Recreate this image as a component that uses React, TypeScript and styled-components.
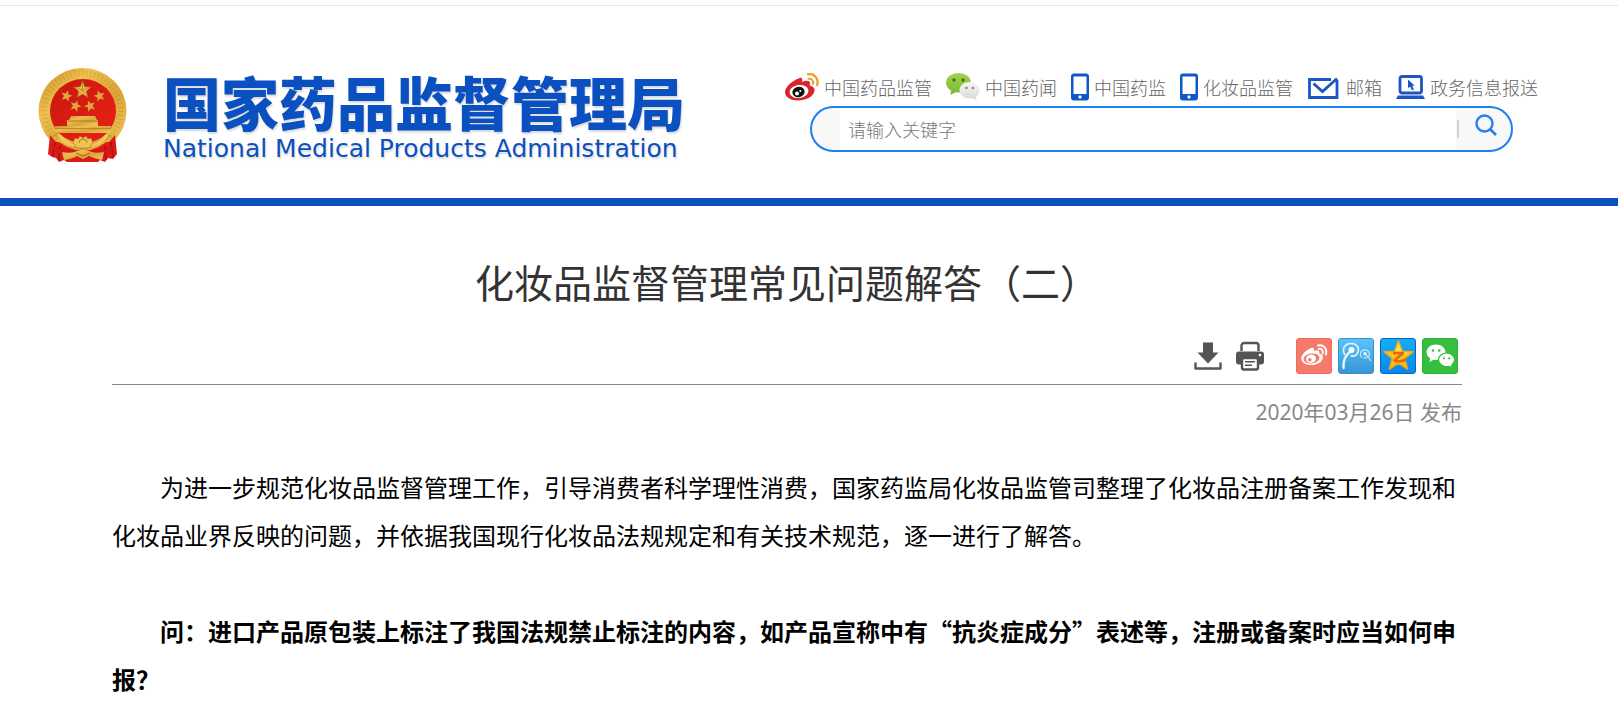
import React from "react";
import styled, { createGlobalStyle } from "styled-components";

const GlobalStyle = createGlobalStyle`
  * { box-sizing: border-box; }
  body {
    margin: 0;
    background: #fff;
    color: #000;
    font-family: "Noto Sans CJK SC", sans-serif;
  }
`;

const TopRule = styled.div`
  margin-top: 5px;
  border-top: 1px solid #e6e6e6;
`;

const Header = styled.header`
  display: flex;
  justify-content: space-between;
  align-items: flex-start;
  gap: 32px;
  padding: 62px 80px 34px 38px;
  border-bottom: 8px solid #0b50c0;
`;

const Brand = styled.a`
  display: flex;
  align-items: flex-start;
  gap: 36px;
  flex: none;
  color: #0b50c0;
  text-decoration: none;
`;

const BrandText = styled.span`
  display: flex;
  flex-direction: column;
`;

const BrandName = styled.span`
  font-size: 58px;
  line-height: 66px;
  font-weight: 900;
  text-shadow: 1px 2px 2px rgba(0, 0, 0, 0.15);
`;

const BrandLatin = styled.span`
  font-family: "DejaVu Sans", sans-serif;
  font-size: 25px;
  line-height: 30px;
  text-shadow: 1px 2px 2px rgba(0, 0, 0, 0.15);
`;

const Tools = styled.div`
  flex: none;
  display: flex;
  flex-direction: column;
`;

const QuickLinks = styled.ul`
  display: flex;
  gap: 14px;
  margin: 0;
  padding: 0;
  list-style: none;
`;

const QuickLink = styled.a`
  display: flex;
  align-items: center;
  gap: 5px;
  height: 38px;
  color: #666;
  font-size: 18px;
  font-weight: 300;
  line-height: 28px;
  text-decoration: none;
  white-space: nowrap;
`;

const SearchForm = styled.form`
  display: flex;
  margin: 0 25px;
  height: 46px;
  padding-left: 28px;
  background: #f8f8f8;
  border: 2px solid #1e7ff0;
  border-radius: 23px;
  overflow: hidden;
`;

const SearchInput = styled.input`
  flex: 1;
  min-width: 0;
  border: 0;
  outline: 0;
  padding: 0 8px;
  background: #fff;
  color: #555;
  font: 300 18px/28px "Noto Sans CJK SC", sans-serif;
  &::placeholder { color: #777; opacity: 1; }
`;

const SearchButton = styled.button`
  display: flex;
  align-items: center;
  gap: 16px;
  border: 0;
  padding: 0 14px 0 1px;
  background: transparent;
  cursor: pointer;
  &::before {
    content: "";
    width: 2px;
    height: 18px;
    background: #d2d2d2;
  }
  svg { margin-bottom: 8px; }
`;

const Article = styled.main`
  padding: 0 156px 0 112px;
`;

const Title = styled.h1`
  margin: 0;
  padding-top: 46px;
  color: #333;
  font-size: 39px;
  line-height: 58px;
  font-weight: 400;
  text-align: center;
`;

const Actions = styled.div`
  display: flex;
  justify-content: flex-end;
  align-items: center;
  gap: 14px;
  padding: 28px 4px 10px 0;
  border-bottom: 1px solid #888;
`;

const ShareList = styled.div`
  display: flex;
  gap: 6px;
  margin-left: 18px;
`;

const IconButton = styled.button`
  display: flex;
  padding: 0;
  border: 0;
  background: transparent;
  cursor: pointer;
`;

const ShareButton = styled(IconButton)<{ $fill: string; $edge: string }>`
  width: 36px;
  height: 36px;
  border: 1px solid ${(p) => p.$edge};
  border-radius: 3px;
  background: ${(p) => p.$fill};
`;

const Published = styled.p`
  margin: 0;
  padding-top: 10px;
  color: #888;
  font-size: 21px;
  line-height: 34px;
  font-family: "Noto Sans", "Noto Sans CJK SC", sans-serif;
  text-align: right;
`;

const Body = styled.div`
  padding-top: 34px;
  font-size: 24px;
  line-height: 48px;
`;

const Paragraph = styled.p<{ $strong?: boolean }>`
  margin: 0;
  text-indent: 2em;
  font-weight: ${(p) => (p.$strong ? 700 : 400)};
  & + & { margin-top: 48px; }
`;

const star = (cx: number, cy: number, r: number, turn = 0) =>
  Array.from({ length: 10 }, (_, i) => {
    const a = ((i * 36 - 90 + turn) * Math.PI) / 180;
    const q = i % 2 ? r * 0.42 : r;
    return `${(cx + q * Math.cos(a)).toFixed(1)},${(cy + q * Math.sin(a)).toFixed(1)}`;
  }).join(" ");

const Emblem = () => (
  <svg width="89" height="94" viewBox="0 0 89 94" aria-hidden="true">
    <defs>
      <linearGradient id="gold" x1="0" y1="0" x2="1" y2="1">
        <stop offset="0" stopColor="#c98a1e" />
        <stop offset="0.3" stopColor="#edc04f" />
        <stop offset="0.6" stopColor="#dba437" />
        <stop offset="1" stopColor="#f3cf62" />
      </linearGradient>
      <linearGradient id="red" x1="0" y1="0" x2="1" y2="1">
        <stop offset="0" stopColor="#c8170f" />
        <stop offset="1" stopColor="#ea2116" />
      </linearGradient>
    </defs>
    <ellipse cx="44.500" cy="43" rx="44" ry="43" fill="url(#gold)" />
    <path d="M12 67 L18 74 H71 L77 67 L79 86 L75 91 L70 90 L67 94 L62 92 L60 94 H29 L26 92 L21 94 L18 90 L14 89 L10 86Z" fill="#dc1a17" />
    <path d="M17 74 L15 88 M22 78 L21 92 M67 78 L68 92 M73 74 L75 89" stroke="#a90f16" strokeWidth="1.500" />
    <path d="M14 68 Q28 82 45 83 Q62 82 75 68 L70 64 H19Z" fill="url(#gold)" />
    <circle cx="44.500" cy="43" r="38" fill="none" stroke="#a96d16" strokeWidth="6" strokeDasharray="1 4" opacity="0.3" pathLength="300" />
    <ellipse cx="45" cy="43" rx="33" ry="32" fill="url(#red)" />
    <polygon points={star(44.5, 22, 9.5)} fill="#edbd4c" stroke="#8f5510" strokeWidth="0.5" />
    <path d="M44.500 22 V13 M44.500 22 L53 19 M44.500 22 L50 29 M44.500 22 L39 29 M44.500 22 L36 19" stroke="#a66b18" strokeWidth="0.6" />
    <polygon points={star(28.5, 28, 6, 15)} fill="#dfa83b" />
    <polygon points={star(61.5, 28, 6, -15)} fill="#dfa83b" />
    <polygon points={star(37.5, 38, 6, 20)} fill="#dfa83b" />
    <polygon points={star(52, 38, 6, -20)} fill="#dfa83b" />
    <path d="M33 48 H57 L59 52 H60 V58 H29 V52 H31Z" fill="url(#gold)" />
    <path d="M30 53 H60" stroke="#a56b18" strokeWidth="0.8" />
    <path d="M17 58 H73 V65 H17Z" fill="url(#gold)" />
    <path d="M17 60.500 H73" stroke="#b57b20" strokeWidth="0.8" />
    <path d="M22 66 Q30 76 38 76 L36 79 Q24 77 19 66Z M68 66 Q60 76 52 76 L54 79 Q66 77 71 66Z" fill="#f0c95a" />
    <path d="M35 75 L37 70 L40 71 L42 68 L45 70 L48 68 L50 71 L53 70 L55 75 L51 80 H39Z" fill="#efc453" stroke="#a56b18" strokeWidth="0.6" />
    <path d="M41 75 A4 4 0 0 1 49 75" fill="none" stroke="#b57b20" />
    <path d="M14 77 Q28 87 45 81 Q62 87 76 77 L76 81 Q62 91 45 86 Q28 91 14 81Z" fill="#d41719" />
    <path d="M24 84 Q34 86 39 83 L45 81 L51 83 Q56 86 66 84 L64 92 Q55 90 51 88 L45 91 L39 88 Q34 91 26 92Z" fill="url(#gold)" />
    <path d="M38 85 L45 88 L52 85" fill="none" stroke="#a56b18" />
  </svg>
);

const WeiboIcon = () => (
  <svg width="34" height="28" viewBox="0 0 34 28" aria-hidden="true">
    <path d="M13.500 5.500 C16 4 18 5 17 9 C21 7 25 7.500 25 10 C25 11 24 12 25 12.500 C28 13.500 30 15 29.500 18 C28 24 21 27.500 13 27.500 C6 27.500 0 24.500 0 19 C0 14 7 8 13.500 5.500Z" fill="#d9242a" />
    <ellipse cx="14" cy="18.500" rx="9.500" ry="6.500" fill="#fff" transform="rotate(-7 14 18.500)" />
    <ellipse cx="13.500" cy="19" rx="6.200" ry="5.200" fill="#111" transform="rotate(-15 13.500 19)" />
    <circle cx="12" cy="20.500" r="2" fill="#fff" />
    <circle cx="15.300" cy="18" r="1" fill="#fff" />
    <path d="M23 1.200 C29 0 34 5.500 32.200 12" fill="none" stroke="#eca02c" strokeWidth="2.400" strokeLinecap="round" />
    <path d="M23.500 5.800 C26.500 5.200 29 7.700 28 11" fill="none" stroke="#eca02c" strokeWidth="2" strokeLinecap="round" />
  </svg>
);

const WechatIcon = () => (
  <svg width="34" height="28" viewBox="0 0 34 28" aria-hidden="true">
    <defs>
      <linearGradient id="leaf" x1="0" y1="0" x2="0" y2="1">
        <stop offset="0" stopColor="#a5d24e" />
        <stop offset="1" stopColor="#79b833" />
      </linearGradient>
      <linearGradient id="mist" x1="0" y1="0" x2="0" y2="1">
        <stop offset="0" stopColor="#f6f6f6" />
        <stop offset="1" stopColor="#d8d8d8" />
      </linearGradient>
    </defs>
    <path d="M12.500 0 C19.500 0 25 4.300 25 10 C25 15.500 19.500 19.500 12.500 19.500 L9.500 19.200 L4.500 22 L5 17.500 C2 15.700 0 13 0 10 C0 4.300 5.500 0 12.500 0Z" fill="url(#leaf)" />
    <circle cx="8" cy="7" r="1.700" fill="#4c6b24" />
    <circle cx="17" cy="7" r="1.700" fill="#4c6b24" />
    <path d="M24 9 C29.500 9 33.500 12.800 33.500 17.200 C33.500 20 32 22.300 30 23.700 L30.500 27.200 L27 25.200 C20 26.500 13.500 23 13.500 17.200 C13.500 12.500 18 9 24 9Z" fill="url(#mist)" />
    <circle cx="20.500" cy="15" r="1.300" fill="#8a8a8a" />
    <circle cx="27" cy="15" r="1.300" fill="#8a8a8a" />
  </svg>
);

const PhoneIcon = () => (
  <svg width="18" height="28" viewBox="0 0 18 28" aria-hidden="true">
    <path fillRule="evenodd" d="M3 0.500 H15 A3 3 0 0 1 18 3.500 V24.500 A3 3 0 0 1 15 27.500 H3 A3 3 0 0 1 0 24.500 V3.500 A3 3 0 0 1 3 0.500Z M2.500 3.500 V21 H15.500 V3.500Z" fill="#0f56c8" />
    <rect x="7.500" y="22.500" width="3" height="3" rx="1" fill="#fff" />
  </svg>
);

const MailIcon = () => (
  <svg width="34" height="28" viewBox="0 0 34 28" aria-hidden="true">
    <path d="M24 6.500 H2.500 V24.500 H30 V7" fill="none" stroke="#1a56c4" strokeWidth="2.800" />
    <path d="M6.500 10.500 L15.500 18.500 L30 5.500" fill="none" stroke="#1a56c4" strokeWidth="2.800" />
  </svg>
);

const LaptopIcon = () => (
  <svg width="29" height="28" viewBox="0 0 29 28" aria-hidden="true">
    <rect x="4" y="3.500" width="21.500" height="16.500" rx="2" fill="none" stroke="#1a56c4" strokeWidth="2.800" />
    <path d="M2 22.500 H27 L29 26 H0Z" fill="#1a56c4" />
    <path d="M12 6.500 L18.500 12.500 L16.300 13 L18 16.500 L15.800 17.300 L14.300 13.800 L12 15Z" fill="#1a56c4" />
  </svg>
);

const SearchIcon = () => (
  <svg width="22" height="22" viewBox="0 0 22 22" aria-hidden="true">
    <circle cx="9.500" cy="9.500" r="8" fill="none" stroke="#2680f0" strokeWidth="2.400" />
    <path d="M15.500 15.500 L21 21" stroke="#2680f0" strokeWidth="2.600" />
  </svg>
);

const DownloadIcon = () => (
  <svg width="28" height="30" viewBox="0 0 28 30" aria-hidden="true">
    <path d="M9 1.500 H19 V11.500 H24.500 L14 22.500 L3.500 11.500 H9Z" fill="#545454" />
    <path d="M1.500 21.500 V27.500 H26.500 V21.500" fill="none" stroke="#545454" strokeWidth="2.400" strokeLinejoin="round" />
  </svg>
);

const PrinterIcon = () => (
  <svg width="28" height="30" viewBox="0 0 28 30" aria-hidden="true">
    <path d="M5.500 10 V4.500 A2.500 2.500 0 0 1 8 2 H20 A2.500 2.500 0 0 1 22.500 4.500 V10" fill="none" stroke="#545454" strokeWidth="2.400" />
    <path d="M3 10.500 H25 A3 3 0 0 1 28 13.500 V20.500 A3 3 0 0 1 25 23.500 H3 A3 3 0 0 1 0 20.500 V13.500 A3 3 0 0 1 3 10.500Z" fill="#545454" />
    <circle cx="24" cy="14" r="1.300" fill="#fff" />
    <rect x="6" y="17" width="16" height="11.500" rx="2" fill="#fff" stroke="#545454" strokeWidth="2.400" />
    <path d="M9 20.800 H19 M9 24.200 H16" stroke="#545454" strokeWidth="1.600" />
  </svg>
);

const ShareWeibo = () => (
  <svg width="34" height="34" viewBox="0 0 34 34" aria-hidden="true">
    <path d="M14 9 C16.500 8 17.500 9.500 16.800 12 C20.500 10.500 23 11.500 22.300 14.500 C25 15.200 26.500 17 25.800 19.500 C24.500 24 18.500 26.500 13 26 C8 25.600 4 23 4.300 19 C4.700 15 10 10.500 14 9Z" fill="#fff" />
    <ellipse cx="14.500" cy="19.500" rx="8" ry="5" fill="#f67a6a" transform="rotate(-8 14.500 19.500)" />
    <ellipse cx="14" cy="19.800" rx="5" ry="4.200" fill="#fff" transform="rotate(-15 14 19.800)" />
    <circle cx="12.800" cy="20.800" r="1.800" fill="#f67a6a" />
    <path d="M21 6.500 C26 5 30.500 9.500 29 15.500 M21.800 10 C24.500 9.300 26.500 11.500 25.700 14.500" fill="none" stroke="#fff" strokeWidth="2" strokeLinecap="round" />
  </svg>
);

const ShareTencentWeibo = () => (
  <svg width="34" height="34" viewBox="0 0 34 34" aria-hidden="true">
    <path d="M4.500 29 C4 22 6.500 16 12 12" fill="none" stroke="#e6f5ff" strokeWidth="2.400" strokeLinecap="round" />
    <path d="M5.500 15.500 C2.500 9 6.500 4.500 12 4.500 C18 4.500 20.500 9 19 13 C18 16 15 17.500 12 17" fill="none" stroke="#e6f5ff" strokeWidth="1.600" strokeLinecap="round" />
    <circle cx="12.500" cy="11" r="3" fill="#fff" />
    <path d="M22.500 18.500 C20 15 22 10.800 26 10.800 C30 10.800 31.500 15 29.500 17.500 C28.500 19 26.500 19.200 25 18.600 M27 16 C29 17.500 31 19.500 31.500 21.500" fill="none" stroke="#c4e5fa" strokeWidth="1.200" strokeLinecap="round" />
    <circle cx="26" cy="14.800" r="1.800" fill="#e6f5ff" />
  </svg>
);

const ShareQzone = () => (
  <svg width="34" height="34" viewBox="0 0 34 34" aria-hidden="true">
    <polygon points={star(17.5, 17.5, 15.5)} fill="#fdc118" stroke="#f3a911" strokeWidth="1.500" strokeLinejoin="round" />
    <path d="M17.500 4 L21 13 L31 14 L22 15 H13Z" fill="#ffdc4a" />
    <path d="M12 14 H22 L13.500 21.500 Q19 23.500 25 20.500" fill="none" stroke="#dd6a12" strokeWidth="2.600" strokeLinejoin="round" />
  </svg>
);

const ShareWechat = () => (
  <svg width="34" height="34" viewBox="0 0 34 34" aria-hidden="true">
    <path d="M13 5.500 C18.500 5.500 22.500 9 22.500 13.500 C22.500 18 18.500 21 13 21 L10.500 20.700 L6.500 23 L7.200 19.300 C5 18 3.500 16 3.500 13.500 C3.500 9 7.500 5.500 13 5.500Z" fill="#fff" />
    <path d="M23.500 14 C28 14 31.500 17 31.500 20.800 C31.500 23 30.300 24.800 28.700 26 L29.200 28.800 L26.200 27.300 C20.500 28.500 15.500 25.200 15.500 20.800 C15.500 17 19 14 23.500 14Z" fill="#fff" stroke="#35bf3e" strokeWidth="1.200" />
    <circle cx="10" cy="11.500" r="1.300" fill="#35bf3e" />
    <circle cx="16.300" cy="11.500" r="1.300" fill="#35bf3e" />
    <circle cx="21" cy="19.300" r="1.100" fill="#35bf3e" />
    <circle cx="26.200" cy="19.300" r="1.100" fill="#35bf3e" />
  </svg>
);

const links = [
  { label: "中国药品监管", Icon: WeiboIcon },
  { label: "中国药闻", Icon: WechatIcon },
  { label: "中国药监", Icon: PhoneIcon },
  { label: "化妆品监管", Icon: PhoneIcon },
  { label: "邮箱", Icon: MailIcon },
  { label: "政务信息报送", Icon: LaptopIcon },
];

const shares = [
  { label: "分享到新浪微博", Icon: ShareWeibo, fill: "#f67a6a", edge: "#f26b5b" },
  { label: "分享到腾讯微博", Icon: ShareTencentWeibo, fill: "linear-gradient(#5cc2fa, #3597d6)", edge: "#3a8fcb" },
  { label: "分享到QQ空间", Icon: ShareQzone, fill: "linear-gradient(#16aef8, #0a86ea)", edge: "#0765c8" },
  { label: "分享到微信", Icon: ShareWechat, fill: "#35bf3e", edge: "#2eb237" },
];

export default function App() {
  return (
    <>
      <GlobalStyle />
      <TopRule />
      <Header>
        <Brand href="#">
          <Emblem />
          <BrandText>
            <BrandName>国家药品监督管理局</BrandName>
            <BrandLatin>National Medical Products Administration</BrandLatin>
          </BrandText>
        </Brand>
        <Tools>
          <nav>
            <QuickLinks>
              {links.map(({ label, Icon }) => (
                <li key={label}>
                  <QuickLink href="#">
                    <Icon />
                    {label}
                  </QuickLink>
                </li>
              ))}
            </QuickLinks>
          </nav>
          <SearchForm role="search" onSubmit={(e) => e.preventDefault()}>
            <SearchInput type="text" aria-label="请输入关键字" placeholder="请输入关键字" />
            <SearchButton type="submit" aria-label="搜索">
              <SearchIcon />
            </SearchButton>
          </SearchForm>
        </Tools>
      </Header>
      <Article lang="zh-CN">
        <Title>化妆品监督管理常见问题解答（二）</Title>
        <Actions>
          <IconButton type="button" aria-label="下载">
            <DownloadIcon />
          </IconButton>
          <IconButton type="button" aria-label="打印">
            <PrinterIcon />
          </IconButton>
          <ShareList>
            {shares.map(({ label, Icon, fill, edge }) => (
              <ShareButton key={label} type="button" aria-label={label} $fill={fill} $edge={edge}>
                <Icon />
              </ShareButton>
            ))}
          </ShareList>
        </Actions>
        <Published>2020年03月26日 发布</Published>
        <Body>
          <Paragraph>
            为进一步规范化妆品监督管理工作，引导消费者科学理性消费，国家药监局化妆品监管司整理了化妆品注册备案工作发现和化妆品业界反映的问题，并依据我国现行化妆品法规规定和有关技术规范，逐一进行了解答。
          </Paragraph>
          <Paragraph $strong>
            问：进口产品原包装上标注了我国法规禁止标注的内容，如产品宣称中有“抗炎症成分”表述等，注册或备案时应当如何申报？
          </Paragraph>
        </Body>
      </Article>
    </>
  );
}
